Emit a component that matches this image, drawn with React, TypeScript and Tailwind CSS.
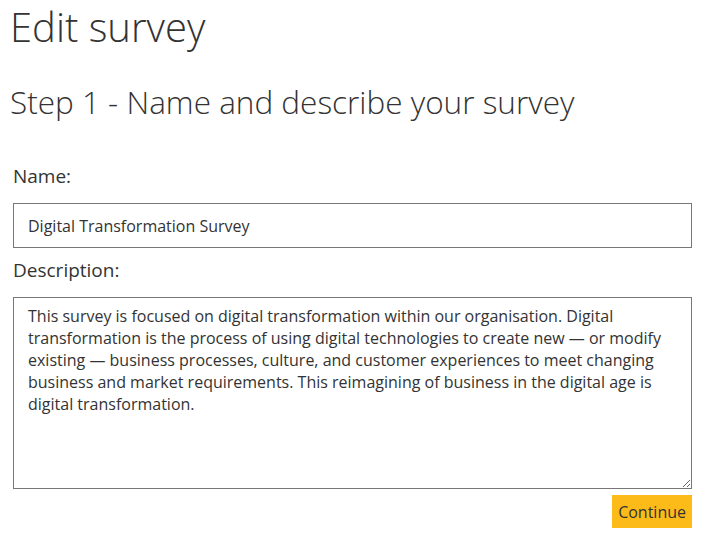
export default function App() {
  const description =
    "This survey is focused on digital transformation within our organisation. Digital transformation is the process of using digital technologies to create new \u2014 or modify existing \u2014 business processes, culture, and customer experiences to meet changing business and market requirements. This reimagining of business in the digital age is digital transformation.";

  return (
    <div className="min-h-screen bg-white pl-[10px] pr-[23px] text-[#333] font-['Open_Sans',sans-serif]">
      <h1 className="pt-[1px] text-[40px] font-light leading-[52px]">Edit survey</h1>
      <h2 className="mt-[28px] text-[31.5px] font-light leading-[42px]">Step 1 - Name and describe your survey</h2>

      <form className="mt-[38px] pl-[3px]" onSubmit={(e) => e.preventDefault()}>
        <label className="block text-[19px] leading-[26px] pt-[2px]">Name:</label>
        <input
          className="mt-[14px] block h-[45px] w-full border border-[#777] px-[14px] text-[16px] text-[#333] outline-none"
          defaultValue="Digital Transformation Survey"
        />
        <label className="mt-[9px] block text-[19px] leading-[26px]">Description:</label>
        <textarea
          className="mt-[14px] block h-[192px] w-full border border-[#777] px-[14px] py-[7px] text-[16px] leading-[22px] text-[#333] outline-none"
          defaultValue={description}
        />
        <div className="mt-[6px] flex justify-end">
          <button className="h-[33px] bg-[#fdbb19] px-[6px] text-[16px] text-[#333]">Continue</button>
        </div>
      </form>
    </div>
  );
}
